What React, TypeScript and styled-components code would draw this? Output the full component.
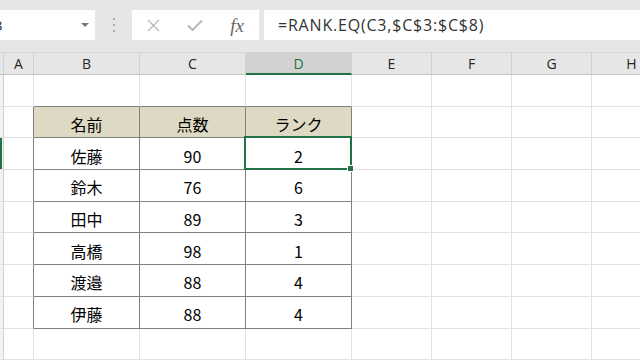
import React from 'react';
import styled, { createGlobalStyle } from 'styled-components';

const GREEN = '#217346';
const GRID = '#e1e1e1';
const DARK = '#808080';

const GlobalStyle = createGlobalStyle`
  html, body { margin: 0; padding: 0; background: #fff; overflow: hidden; }
  * { box-sizing: border-box; }
`;

const Window = styled.div`
  width: 640px;
  height: 360px;
  overflow: hidden;
  display: flex;
  flex-direction: column;
  font-family: "Open Sans", "Liberation Sans", sans-serif;
`;

const FormulaBar = styled.div`
  height: 53px;
  flex: none;
  display: flex;
  align-items: flex-start;
  padding-top: 10px;
  background: #e6e6e6;
  border-bottom: 1px solid #d6d6d6;
`;

const NameBox = styled.div`
  flex: none;
  margin-left: -40px;
  width: 135px;
  height: 30px;
  background: #fff;
  display: flex;
  align-items: center;
  justify-content: space-between;
  padding: 0 6px 0 23px;
  font-size: 15px;
  color: #333;
`;

const Arrow = styled.span`
  width: 0;
  height: 0;
  border-left: 4px solid transparent;
  border-right: 4px solid transparent;
  border-top: 4px solid #777;
`;

const Grip = styled.div`
  flex: none;
  width: 37px;
  height: 30px;
  display: flex;
  flex-direction: column;
  align-items: center;
  justify-content: center;
  gap: 4px;
  span {
    width: 2px;
    height: 2px;
    background: #adadad;
  }
`;

const FxBox = styled.div`
  flex: none;
  width: 127px;
  height: 30px;
  background: #fff;
  display: grid;
  grid-template-columns: repeat(3, 42px);
  align-items: center;
  justify-items: center;
`;

const Fx = styled.span`
  font-family: "Liberation Serif", serif;
  font-style: italic;
  font-size: 19px;
  color: #666;
  line-height: 1;
`;

const FormulaInput = styled.div`
  flex: 1;
  margin-left: 5px;
  height: 30px;
  background: #fff;
  display: flex;
  align-items: center;
  padding-left: 14px;
  font-size: 16px;
  letter-spacing: 0.8px;
  color: #333;
  white-space: nowrap;
`;

const Sheet = styled.div`
  display: grid;
  grid-template-columns: 4px 30px 106px 106px 106px 80px 80px 80px 80px;
  grid-template-rows: 22px repeat(9, 31.7px);
`;

const ColHeader = styled.div<{ $selected?: boolean }>`
  display: flex;
  align-items: center;
  justify-content: center;
  font-size: 14px;
  color: ${(p) => (p.$selected ? GREEN : '#262626')};
  background: ${(p) => (p.$selected ? '#d2d2d2' : '#e6e6e6')};
  border-right: 1px solid #d0d0d0;
  border-bottom: ${(p) => (p.$selected ? `2px solid ${GREEN}` : '1px solid #c4c4c4')};
`;

const RowHeader = styled.div<{ $selected?: boolean }>`
  background: #f3f3f3;
  border-right: 1px solid #cfcfcf;
  border-bottom: 1px solid ${GRID};
  box-shadow: ${(p) => (p.$selected ? `inset 2px 0 ${GREEN}` : 'none')};
`;

const Cell = styled.div<{ $right: string; $bottom: string; $bg?: string }>`
  position: relative;
  display: flex;
  align-items: center;
  justify-content: center;
  padding-top: 4px;
  font-family: "Noto Sans CJK JP", "Noto Sans", sans-serif;
  font-size: 16px;
  color: #000;
  background: ${(p) => p.$bg || '#fff'};
  border-right: 1px solid ${(p) => p.$right};
  border-bottom: 1px solid ${(p) => p.$bottom};
`;

const Selection = styled.div`
  position: absolute;
  left: -2px;
  top: -2px;
  right: -1px;
  bottom: -1px;
  border: 2px solid ${GREEN};
  z-index: 2;
  pointer-events: none;
`;

const FillHandle = styled.div`
  position: absolute;
  right: -4px;
  bottom: -4px;
  width: 7px;
  height: 7px;
  background: ${GREEN};
  border: 1px solid #fff;
`;

const columns = ['A', 'B', 'C', 'D', 'E', 'F', 'G', 'H'];

const table: string[][] = [
  ['名前', '点数', 'ランク'],
  ['佐藤', '90', '2'],
  ['鈴木', '76', '6'],
  ['田中', '89', '3'],
  ['高橋', '98', '1'],
  ['渡邉', '88', '4'],
  ['伊藤', '88', '4'],
];

// sheet rows 1..9, table sits in B2:D8
const ROWS = 9;

export default function App() {
  const cells: React.ReactNode[] = [];

  cells.push(<ColHeader key="corner" />);
  columns.forEach((c) =>
    cells.push(
      <ColHeader key={`h-${c}`} $selected={c === 'D'}>
        {c}
      </ColHeader>
    )
  );

  for (let r = 1; r <= ROWS; r++) {
    cells.push(<RowHeader key={`r-${r}`} $selected={r === 3} />);
    const t = r - 2;
    const inTable = t >= 0 && t < table.length;
    columns.forEach((c, ci) => {
      const inCol = ci >= 1 && ci <= 3;
      let right = GRID;
      let bottom = GRID;
      if (inTable && (inCol || ci === 0)) right = DARK;
      if (inCol && (inTable || r === 1)) bottom = DARK;
      const boxed = inTable && inCol;
      cells.push(
        <Cell
          key={`${c}${r}`}
          $right={right}
          $bottom={bottom}
          $bg={boxed && t === 0 ? '#ddd9c4' : undefined}
        >
          {boxed ? table[t][ci - 1] : null}
          {c === 'D' && r === 3 && (
            <Selection>
              <FillHandle />
            </Selection>
          )}
        </Cell>
      );
    });
  }

  return (
    <Window>
      <GlobalStyle />
      <FormulaBar>
        <NameBox>
          D3
          <Arrow />
        </NameBox>
        <Grip>
          <span />
          <span />
          <span />
        </Grip>
        <FxBox>
          <svg width="13" height="13" viewBox="0 0 13 13">
            <path d="M1 1 L12 12 M12 1 L1 12" stroke="#b8b8b8" strokeWidth="1.3" />
          </svg>
          <svg width="16" height="12" viewBox="0 0 16 12">
            <path d="M1 6.5 L5.5 11 L15 1.5" stroke="#b8b8b8" strokeWidth="2" fill="none" />
          </svg>
          <Fx>fx</Fx>
        </FxBox>
        <FormulaInput>=RANK.EQ(C3,$C$3:$C$8)</FormulaInput>
      </FormulaBar>
      <Sheet>{cells}</Sheet>
    </Window>
  );
}
